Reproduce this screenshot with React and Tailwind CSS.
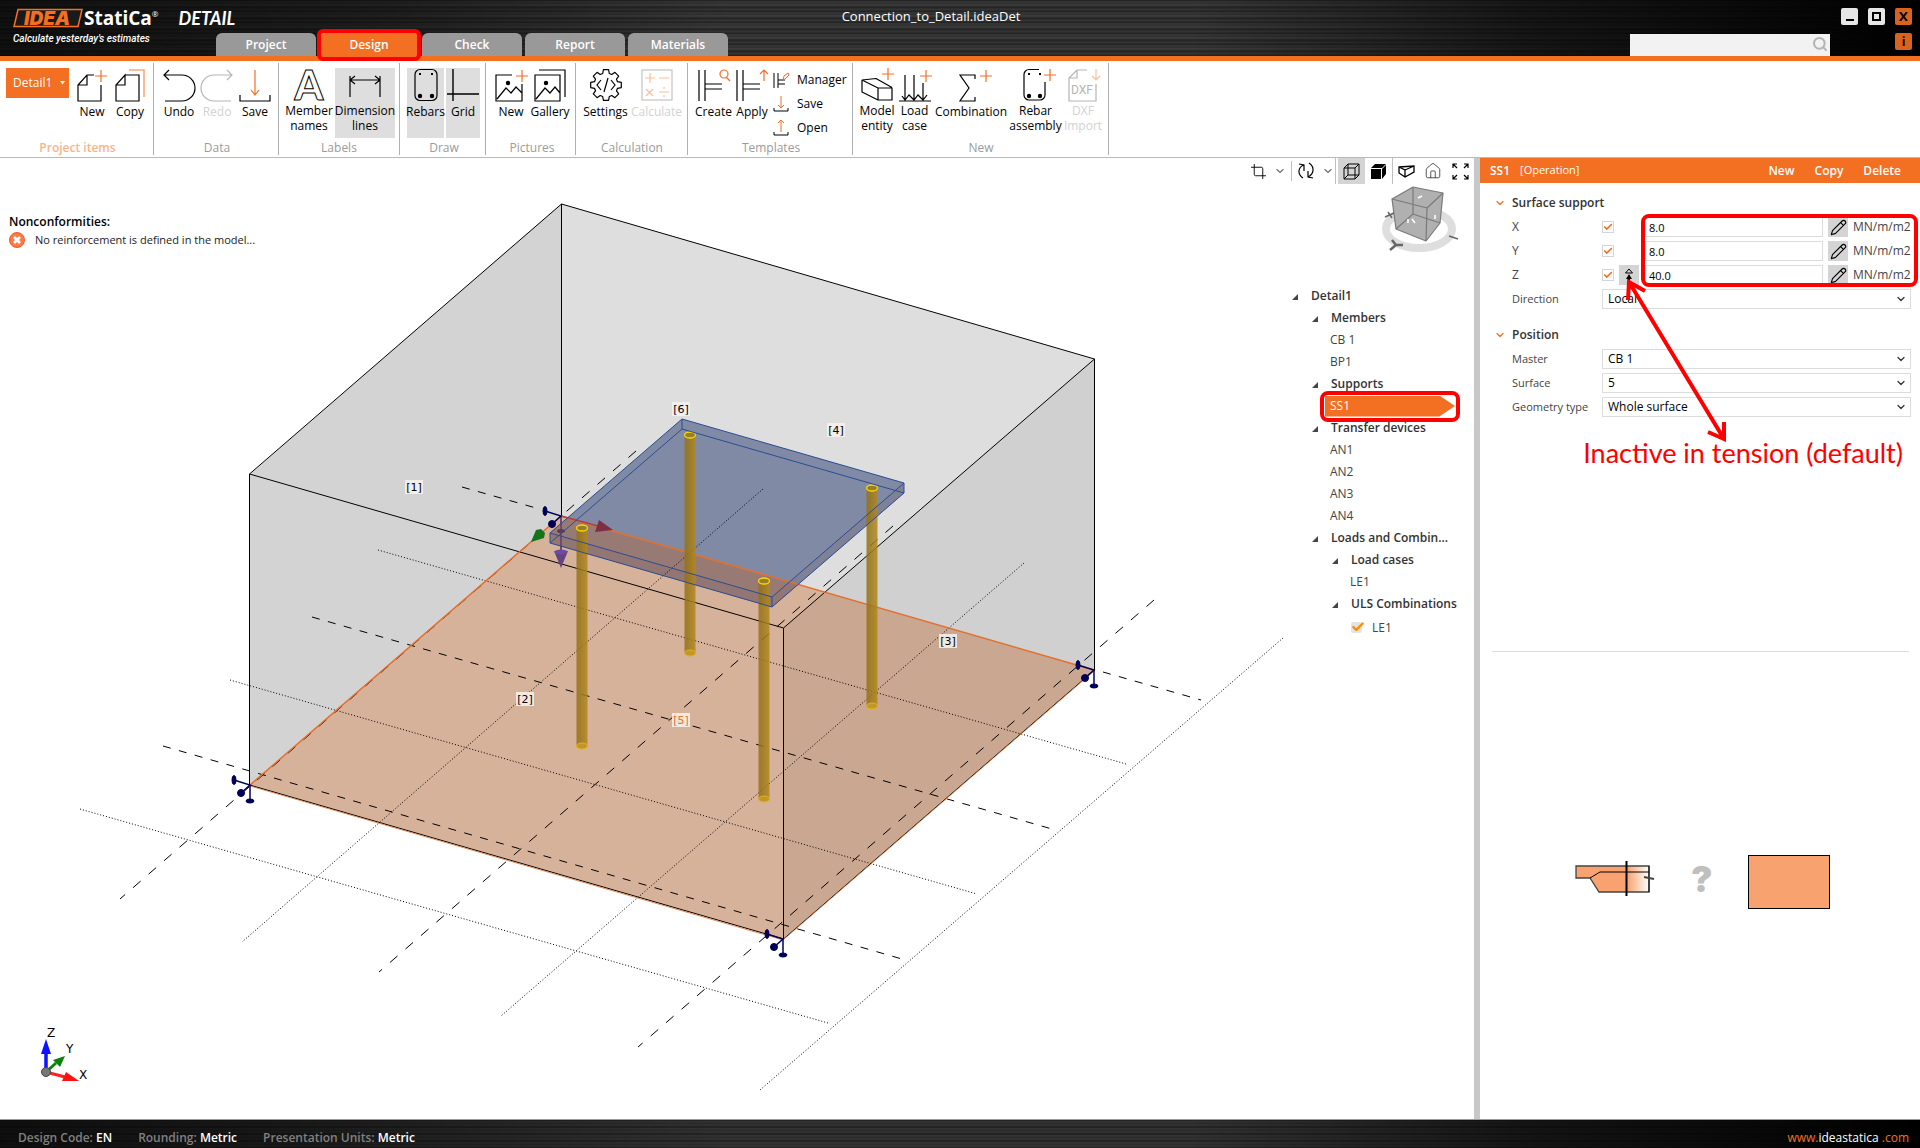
import React from 'react';
import { ChevronDown, Pencil, Check, Search, Crop, House } from 'lucide-react';

const ORANGE = '#f36f21';

/* ---------- ribbon icons ---------- */

function Icon({ children, color = '#000' }) {
  return (
    <svg width="32" height="32" viewBox="0 0 32 32" fill="none" stroke={color} strokeWidth="1.2" className="shrink-0 overflow-visible">
      {children}
    </svg>
  );
}

function Plus({ x = 25, y = 7 }) {
  return <path d={`M${x} ${y - 6}v12M${x - 6} ${y}h12`} stroke={ORANGE} />;
}

const gearPoints = () => {
  const pts = [];
  for (let i = 0; i < 8; i++) {
    const a = (i * Math.PI) / 4;
    [[-0.28, 12], [-0.17, 15.5], [0.17, 15.5], [0.28, 12]].forEach(([d, r]) => {
      pts.push(`${(16 + r * Math.sin(a + d)).toFixed(1)},${(16 - r * Math.cos(a + d)).toFixed(1)}`);
    });
  }
  return pts.join(' ');
};

const icons = {
  newItem: (
    <Icon>
      <path d="M25 16V32H2V16L11 6H18M11 6V16H2" />
      <Plus />
    </Icon>
  ),
  copy: (
    <Icon>
      <path d="M11 6H25V32H2V16L11 6V16H2" />
      <path d="M15 1H30V28" stroke="#f8a878" strokeWidth="1.6" />
    </Icon>
  ),
  undo: <Icon><path d="M1 6H19a13 13 0 0 1 0 26H2M6 1L1 6l5 5" /></Icon>,
  redo: <Icon color="#b5b5b5"><path d="M31 6H13a13 13 0 0 0 0 26H30M26 1l5 5-5 5" /></Icon>,
  save: (
    <Icon>
      <path d="M1 26V32H31V26" />
      <path d="M16 1V25M12 21l4 5 4-5" stroke={ORANGE} />
    </Icon>
  ),
  names: (
    <Icon>
      <text x="16" y="31" textAnchor="middle" fontFamily="Lato" fontWeight="900" fontSize="41" strokeWidth="1">A</text>
    </Icon>
  ),
  dims: <Icon><path d="M1 28V7M31 28V7M1 11H31M6 7l-5 4 5 4M26 7l5 4-5 4" /></Icon>,
  rebars: (
    <Icon>
      <rect x="5" y="0.5" width="22" height="31" rx="5" />
      <circle cx="10" cy="27" r="1.6" fill="#000" />
      <circle cx="22" cy="27" r="1.6" fill="#000" />
      <path d="M9 5h2M21 5h2" strokeWidth="2" />
    </Icon>
  ),
  grid: <Icon><path d="M6 0V32M0 25H32" strokeWidth="1.4" /></Icon>,
  picture: (
    <Icon>
      <path d="M17 6H1V32H27V15M2 30l9-11 5 5 5-6 6 6" />
      <circle cx="13" cy="14" r="1.6" fill="#000" />
      <Plus x={27} />
    </Icon>
  ),
  gallery: (
    <Icon>
      <path d="M1 6H26V32H1zM2 30l9-11 5 5 5-6 5 6M5 1H31V28" />
      <circle cx="12" cy="14" r="1.6" fill="#000" />
    </Icon>
  ),
  settings: (
    <Icon>
      <polygon points={gearPoints()} strokeLinejoin="round" />
      <path d="M11 11l-4 5 4 5M21 11l4 5-4 5M18 9l-4 14" />
    </Icon>
  ),
  calculate: (
    <Icon color="#c4c4c4">
      <rect x="1" y="1" width="30" height="30" />
      <path d="M9 4v10M4 9h10M18 9h10M5 20l7 7M12 20l-7 7M18 23h10M23 18v2M23 26v2" stroke="#fac09c" />
    </Icon>
  ),
  create: (
    <Icon>
      <path d="M1 1V32M7 1V32M7 15H24M7 20H24" />
      <circle cx="26" cy="5" r="4" stroke={ORANGE} />
      <path d="M28 8l4 4" stroke={ORANGE} />
    </Icon>
  ),
  apply: (
    <Icon>
      <path d="M1 1V32M7 1V32M7 15H24M7 20H24" />
      <path d="M28 12V1M24 5l4-4 4 4" stroke={ORANGE} />
    </Icon>
  ),
  model: (
    <Icon>
      <path d="M1 11L17 19V31L1 23zM1 11L15 9.500L31 18.500M17 19H31V31H17z" strokeLinejoin="round" />
      <Plus x={27} y={5} />
    </Icon>
  ),
  loadCase: (
    <Icon>
      <path d="M0 32H32M6 6V31M15 6V31M24 14V31M3 27l3 4 4-5 5 5 4-5 5 5 4-5" />
      <Plus x={27} />
    </Icon>
  ),
  sigma: (
    <Icon>
      <path d="M20 10V6H5L14 19L5 32H20V28" />
      <Plus x={31} />
    </Icon>
  ),
  rebarNew: (
    <Icon>
      <path d="M19 .500H9a5 5 0 0 0-5 5V26a5 5 0 0 0 5 5H20a5 5 0 0 0 5-5V13" />
      <circle cx="9" cy="27" r="1.6" fill="#000" />
      <circle cx="20" cy="27" r="1.6" fill="#000" />
      <path d="M8 5h2M19 5h2" strokeWidth="2" />
      <Plus x={30} y={6} />
    </Icon>
  ),
  dxf: (
    <Icon color="#b5b5b5">
      <path d="M20 1H10L2 9V32H29V15M10 1V9H2" />
      <path d="M29 0V11M25 7l4 4 4-4" stroke="#fac09c" />
      <text x="15" y="25" textAnchor="middle" fontFamily="Roboto" fontSize="12" stroke="none" fill="#b5b5b5">DXF</text>
    </Icon>
  ),
};

/* ---------- ribbon ---------- */

const groups = [
  {
    name: 'Project items', box: 'w-[154px] pl-1.5', caption: 'font-semibold text-[#f8b48c]', selector: true,
    items: [
      { label: 'New', icon: icons.newItem, w: 'w-[38px]' },
      { label: 'Copy', icon: icons.copy, w: 'w-[38px]' },
    ],
  },
  {
    name: 'Data', box: 'w-[125px] pl-1.5', caption: 'text-[#9b9b9b]',
    items: [
      { label: 'Undo', icon: icons.undo, w: 'w-[38px]' },
      { label: 'Redo', icon: icons.redo, w: 'w-[38px]', disabled: true },
      { label: 'Save', icon: icons.save, w: 'w-[38px]' },
    ],
  },
  {
    name: 'Labels', box: 'w-[121px] pl-1', caption: 'text-[#9b9b9b]',
    items: [
      { label: 'Member names', icon: icons.names, w: 'w-[52px]' },
      { label: 'Dimension lines', icon: icons.dims, w: 'w-[60px] bg-[#dedede]' },
    ],
  },
  {
    name: 'Draw', box: 'w-[86px] pl-[7px]', caption: 'text-[#9b9b9b]',
    items: [
      { label: 'Rebars', icon: icons.rebars, w: 'w-[37px] mr-0.5 bg-[#dedede]' },
      { label: 'Grid', icon: icons.grid, w: 'w-[34px] bg-[#dedede]' },
    ],
  },
  {
    name: 'Pictures', box: 'w-[90px] pl-[7px]', caption: 'text-[#9b9b9b]',
    items: [
      { label: 'New', icon: icons.picture, w: 'w-[36px]' },
      { label: 'Gallery', icon: icons.gallery, w: 'w-[42px]' },
    ],
  },
  {
    name: 'Calculation', box: 'w-[112px] pl-[5px]', caption: 'text-[#9b9b9b]',
    items: [
      { label: 'Settings', icon: icons.settings, w: 'w-[49px]' },
      { label: 'Calculate', icon: icons.calculate, w: 'w-[53px]', disabled: true },
    ],
  },
  {
    name: 'Templates', box: 'w-[165px] pl-[6px]', caption: 'text-[#9b9b9b]', templates: true,
    items: [
      { label: 'Create', icon: icons.create, w: 'w-[39px]' },
      { label: 'Apply', icon: icons.apply, w: 'w-[38px]' },
    ],
  },
  {
    name: 'New', box: 'w-[256px] pl-[5px]', caption: 'text-[#9b9b9b]',
    items: [
      { label: 'Model entity', icon: icons.model, w: 'w-[38px]' },
      { label: 'Load case', icon: icons.loadCase, w: 'w-[37px]' },
      { label: 'Combination', icon: icons.sigma, w: 'w-[76px]' },
      { label: 'Rebar assembly', icon: icons.rebarNew, w: 'w-[53px]' },
      { label: 'DXF Import', icon: icons.dxf, w: 'w-[42px]', disabled: true },
    ],
  },
];

function RibbonButton({ item }) {
  const [first, second] = item.label.split(' ');
  return (
    <button
      disabled={item.disabled}
      className={`${item.w} h-[70px] pt-px flex flex-col items-center gap-0.5 shrink-0 leading-[15px] disabled:text-[#d2d2d2]`}
    >
      {item.icon}
      {second ? <span>{first}<br />{second}</span> : <span className="pt-px">{first}</span>}
    </button>
  );
}

function TemplateButtons() {
  const small = [
    {
      label: 'Manager',
      art: <><path d="M1 1V16M5 1V16M5 8H12M5 12H12" /><path d="M10 8l1-4 4-3 1 2-4 4z" stroke={ORANGE} /></>,
    },
    { label: 'Save', art: <><path d="M1 12V15H15V12" /><path d="M8 0V12M5 9l3 3 3-3" stroke={ORANGE} /></> },
    { label: 'Open', art: <><path d="M1 12V15H15V12" /><path d="M8 12V0M5 3l3-3 3 3" stroke={ORANGE} /></> },
  ];
  return (
    <div className="flex flex-col pl-0.5">
      {small.map((s) => (
        <button key={s.label} className="flex items-center gap-2 h-6">
          <svg width="16" height="16" viewBox="0 0 16 16" fill="none" stroke="#000" className="overflow-visible">{s.art}</svg>
          {s.label}
        </button>
      ))}
    </div>
  );
}

function Ribbon() {
  return (
    <div className="flex h-[97px] pt-0.5 border-b border-[#b9b9b9] text-[12px] text-black bg-white">
      {groups.map((g) => (
        <div key={g.name} className={`${g.box} h-[92px] border-r border-[#b0b0b0] flex flex-col justify-between shrink-0`}>
          <div className="flex pt-[5px]">
            {g.selector && (
              <button className="w-[63px] h-[30px] mr-1 pl-[7px] pr-1 flex items-center justify-between bg-[#f36f21] text-white shrink-0">
                Detail1
                <svg width="5" height="4" viewBox="0 0 5 4"><path d="M0 0H5L2.500 3.500z" fill="#fff" /></svg>
              </button>
            )}
            {g.items.map((item) => <RibbonButton key={item.label} item={item} />)}
            {g.templates && <TemplateButtons />}
          </div>
          <div className={`text-center leading-[15px] pr-1 ${g.caption}`}>{g.name}</div>
        </div>
      ))}
    </div>
  );
}

/* ---------- header ---------- */

function Logo() {
  return (
    <div className="w-[216px] pl-[13px] pt-1.5 shrink-0">
      <div className="flex items-center text-white h-6">
        <svg width="70" height="20" viewBox="0 0 70 20" className="shrink-0">
          <path d="M5 1.500H69L65 18.500H1z" fill="#1a1a1a" stroke="#f36f21" strokeWidth="1.5" />
          <text x="34" y="16.500" textAnchor="middle" fontFamily="Inter" fontStyle="italic" fontWeight="900" fontSize="19" fill="#f36f21">IDEA</text>
        </svg>
        <span className="ml-px font-bold text-[19px]">StatiCa</span>
        <sup className="text-[8px]">®</sup>
        <span className="ml-5 font-['Lato'] font-bold italic text-[18px]">DETAIL</span>
      </div>
      <div className="text-white italic font-medium text-[10px] leading-[14px] mt-0.5 font-['Roboto']">Calculate yesterday&apos;s estimates</div>
    </div>
  );
}

function Header() {
  return (
    <header className="flex h-[61px] border-b-[5px] border-[#f36f21] bg-[linear-gradient(90deg,rgba(0,0,0,.7)_0%,rgba(0,0,0,.45)_20%,transparent_38%,transparent_62%,rgba(0,0,0,.6)_80%,#000_100%),repeating-linear-gradient(180deg,#1c1c1c_0px,#3c3c3c_2px,#2a2a2a_3px,#404040_5px,#222_7px,#383838_10px,#1e1e1e_11px)]">
      <Logo />
      <div className="flex-1 flex flex-col justify-between">
        <div className="pt-1.5 pl-4 text-center text-white text-[13px] leading-5">Connection_to_Detail.ideaDet</div>
        <nav className="flex gap-[3px] text-[12px] font-semibold text-white">
          {['Project', 'Design', 'Check', 'Report', 'Materials'].map((tab) => (
            <button
              key={tab}
              className={tab === 'Design' ? 'relative w-[100px] h-[23px] bg-[#f36f21]' : 'w-[100px] h-[23px] rounded-t-md bg-[#999]'}
            >
              {tab}
              {tab === 'Design' && <span className="absolute -inset-x-0.5 -top-1 -bottom-[5px] border-4 border-[#ff0000] rounded-md" />}
            </button>
          ))}
        </nav>
      </div>
      <div className="w-[290px] pt-2 pr-2 flex flex-col gap-2 shrink-0">
        <div className="flex justify-end gap-2.5">
          <button aria-label="Minimize" className="w-[17px] h-[17px] rounded-xs bg-[#e6e6e6] flex justify-center items-end pb-1">
            <span className="w-2 h-0.5 bg-black" />
          </button>
          <button aria-label="Maximize" className="w-[17px] h-[17px] rounded-xs bg-[#e6e6e6] flex justify-center items-center">
            <span className="w-[9px] h-[9px] border-2 border-black" />
          </button>
          <button aria-label="Close" className="w-[17px] h-[17px] rounded-xs bg-[#d9631e] flex justify-center items-center">
            <svg width="9" height="9" viewBox="0 0 9 9"><path d="M1 0L8 9M8 0L1 9" stroke="#000" strokeWidth="2" /></svg>
          </button>
        </div>
        <div className="flex justify-between">
          <label className="relative">
            <input type="search" aria-label="Search" className="w-[200px] h-[22px] bg-[#f2f2f2]" />
            <Search size={16} strokeWidth={3} className="absolute right-0.5 top-[3px] text-[#b5b5b5]" />
          </label>
          <button aria-label="Info" className="w-[17px] h-[17px] rounded-xs bg-[#d9631e] text-black font-bold text-[12px] leading-[16px]">i</button>
        </div>
      </div>
    </header>
  );
}

/* ---------- 3D scene ---------- */

const dashedX = [[462, 487, 536, 508], [1103, 672, 1201, 700], [312, 617, 1052, 829], [163, 746, 902, 959]];
const dottedX = [[378, 550, 1126, 764], [230, 680, 977, 894], [80, 809, 828, 1023]];
const dashedY = [[636, 451, 120, 899], [893, 526, 379, 972], [1154, 600, 638, 1047]];
const dottedY = [[763, 489, 242, 942], [1024, 563, 501, 1016], [1283, 638, 760, 1090]];

const bolts = [[690, 435], [872, 488], [582, 528], [764, 581]];
const faceTags = [
  ['[1]', 405, 480], ['[2]', 516, 692], ['[3]', 939, 634],
  ['[4]', 827, 423], ['[5]', 672, 713], ['[6]', 672, 402],
];

function Lines({ data, dash }) {
  return data.map(([x1, y1, x2, y2]) => (
    <line key={`${x1}-${y1}`} x1={x1} y1={y1} x2={x2} y2={y2} strokeDasharray={dash} />
  ));
}

function Support({ x, y, hidden }) {
  return (
    <g transform={`translate(${x} ${y})`} fill="#000058" stroke="#000058">
      <path d="M-16 -5L0 0L-9 8" fill="none" strokeWidth="1.5" />
      <ellipse cx="-16" cy="-5" rx="2" ry="4.5" />
      <ellipse cx="-9" cy="8" rx="3.5" ry="3.5" />
      {!hidden && <path d="M0 0V15" strokeWidth="1.5" />}
      {!hidden && <ellipse cx="0" cy="16" rx="4" ry="2" />}
    </g>
  );
}

function Scene() {
  return (
    <svg viewBox="0 158 1474 961" preserveAspectRatio="xMinYMin meet" className="absolute inset-0 w-full h-full">
      <defs>
        <linearGradient id="bolt" x1="0" x2="1">
          <stop offset="0" stopColor="#94701a" />
          <stop offset="0.3" stopColor="#987618" />
          <stop offset="1" stopColor="#b3881c" />
        </linearGradient>
        <clipPath id="floor"><polygon points="561,516 1094,670 783,939 250,785" /></clipPath>
      </defs>

      {/* Block faces */}
      <polygon points="561,204 250,474 250,785 561,516" fill="#d3d3d3" />
      <polygon points="561,204 1094,359 1094,670 561,516" fill="#dedede" />
      <polygon points="561,516 1094,670 783,939 250,785" fill="#d7b29b" />
      <polygon points="783,628 1094,359 1094,670 783,939" fill="#000" opacity="0.06" />

      {/* Plate fill */}
      <polygon points="682,419 904,483 904,493 772,607 550,543 550,533" fill="rgba(34,54,108,.5)" />
      <g clipPath="url(#floor)">
        <polygon points="682,419 904,483 904,493 772,607 550,543 550,533" fill="#987a75" />
      </g>
      <polygon points="550,533 772,597 904,483 904,493 772,607 550,543" fill="#7d6a70" opacity="0.25" />

      {/* Ground grid */}
      <g stroke="#000" strokeWidth="1" fill="none">
        <Lines data={dashedX} dash="8 8.5" />
        <Lines data={dottedX} dash="1 2" />
        <Lines data={dashedY} dash="10 10.5" />
        <Lines data={dottedY} dash="1 2" />
      </g>

      {/* Block edges */}
      <path
        d="M561.5 204L249.500 474V785L783.500 939L1094.500 670V359zM561.500 204V516M249.500 474L783.500 628L1094.500 359M783.500 628V939"
        stroke="#000" fill="none"
      />
      <path d="M561 516L1094 670M561 516L250 785" stroke="#e2702f" strokeWidth="1.5" fill="none" />
      <path d="M250 786L783 940L1094 671" stroke="#e2702f" strokeWidth="0.8" fill="none" />

      {/* Local axes */}
      <path d="M561 516V551" stroke="#6f4a73" strokeWidth="2" />
      <polygon points="554,551 568,551 561,568" fill="#64447f" />
      <ellipse cx="561" cy="552" rx="6.5" ry="2.5" fill="#6e4aa0" />
      <path d="M561 516L598 526" stroke="#b04040" strokeWidth="1.5" />
      <polygon points="599,520 613,530 595,532" fill="#7d2f45" />
      <ellipse cx="561" cy="531" rx="4" ry="2" fill="#5d3c50" />
      <Support x={561} y={516} hidden />
      <polygon points="531,542 536,530 541,529 545,533 544,538" fill="#177317" />

      {/* Bolts */}
      {bolts.map(([x, y]) => (
        <g key={x}>
          <rect x={x - 5.5} y={y} width="11" height="218" fill="url(#bolt)" opacity="0.85" />
          <ellipse cx={x} cy={y + 218} rx="5.5" ry="3" fill="#c2962a" stroke="#e0b414" />
          <ellipse cx={x} cy={y} rx="5.5" ry="3" fill="#94802c" stroke="#ffd400" strokeWidth="1.3" />
        </g>
      ))}

      {/* Plate edges */}
      <path
        d="M682 419L904 483L772 597L550 533zM682 429L904 493L772 607L550 543zM682 419V429M904 483V493M772 597V607M550 533V543"
        stroke="#2c4c92" fill="none"
      />

      <Support x={250} y={785} />
      <Support x={783} y={939} />
      <Support x={1094} y={670} />

      {faceTags.map(([t, x, y]) => (
        <g key={t}>
          <rect x={x} y={y} width="18" height="14" fill="#f6f2ef" opacity="0.85" />
          <text x={x + 9} y={y + 11} textAnchor="middle" fontFamily="DejaVu Sans" fontSize="11" fill={t === '[5]' ? ORANGE : '#000'}>{t}</text>
        </g>
      ))}

      {/* Axis triad */}
      <g fontFamily="DejaVu Sans" fontSize="12" fill="#000">
        <path d="M46 1072L56 1063" stroke="#0c800c" strokeWidth="3" />
        <polygon points="65,1056 53,1060 60,1067" fill="#0c800c" />
        <path d="M46 1072L65 1077" stroke="#ff2020" strokeWidth="3" />
        <polygon points="79,1081 66,1072 62,1081" fill="#f11" />
        <path d="M46 1072V1053" stroke="#11f" strokeWidth="3.5" />
        <polygon points="46,1039 41,1054 51,1054" fill="#11f" />
        <circle cx="46" cy="1072" r="4.5" fill="#777" stroke="#444" />
        <text x="47" y="1037">Z</text>
        <text x="66" y="1053">Y</text>
        <text x="79" y="1079">X</text>
      </g>
    </svg>
  );
}

function ViewCube() {
  return (
    <svg width="80" height="68" viewBox="1380 186 80 68" className="self-end mr-3.5 mt-px">
      <ellipse cx="1419" cy="230" rx="33" ry="19" fill="none" stroke="#dedede" strokeWidth="8" />
      <g stroke="#7a7a7a" strokeWidth="1.2" strokeLinejoin="round">
        <polygon points="1413,188 1443,194 1440,224 1426,242 1396,230 1392,200" fill="#b0b0b0" />
        <path d="M1392 200L1427 209L1443 194M1427 209L1426 242M1413 188V215L1396 230M1413 215L1440 224" fill="none" />
      </g>
      <path d="M1418 199l4-2M1408 220v4M1412 220l3 4M1435 216v4" stroke="#fff" strokeWidth="1.5" />
      <path d="M1385 218l9-4M1388 213l4 6M1449 237l9 3" stroke="#666" strokeWidth="1.5" />
      <path d="M1390 251l6-5M1396 246l7 0M1396 246l-4-5" stroke="#666" strokeWidth="2.5" />
    </svg>
  );
}

const toolButton = 'h-[26px] flex items-center justify-center';

function Toolbar() {
  return (
    <div className="flex items-center h-[26px] pl-1 text-black">
      <button aria-label="Clip" className={`w-5 ${toolButton}`}><Crop size={17} strokeWidth={1.3} /></button>
      <button aria-label="Clip options" className={`w-[22px] ${toolButton}`}><ChevronDown size={12} strokeWidth={2} /></button>
      <span className="w-px h-5 bg-[#c0c0c0]" />
      <button aria-label="Rotate" className={`w-[30px] ${toolButton}`}>
        <svg width="16" height="18" viewBox="0 0 16 18" fill="none" stroke="#000" strokeWidth="1.2">
          <path d="M5 16C-1 12 0 5 6 3M1 2l5 1v6M11 1c6 4 5 11-1 14M15 16l-5-1V9" />
        </svg>
      </button>
      <button aria-label="Rotate options" className={`w-3.5 ${toolButton}`}><ChevronDown size={12} strokeWidth={2} /></button>
      <div className="flex items-center border-x border-[#c0c0c0] h-[26px] pl-0.5">
        <button aria-label="Wireframe" className={`w-[27px] bg-[#d4d4d4] ${toolButton}`}>
          <svg width="17" height="17" viewBox="0 0 17 17" fill="none" stroke="#000">
            <path d="M1 5H12V16H1zM1 5L5 1H16L12 5M16 1V12L12 16M5 1V12H16M5 12L1 16" />
          </svg>
        </button>
        <button aria-label="Solid" className={`w-[27px] ${toolButton}`}>
          <svg width="17" height="17" viewBox="0 0 17 17"><path d="M1 6H11V16H1zM1 5L5 1H16L12 5zM12 6L16 2V11L12 16z" /></svg>
        </button>
      </div>
      <button aria-label="Perspective" className={`w-7 ${toolButton}`}>
        <svg width="17" height="17" viewBox="0 0 17 17" fill="none" stroke="#000" strokeWidth="1.3">
          <path d="M1 4L16 3V9L7 14L1 10zM1 4L7 7V14M7 7L16 3" />
        </svg>
      </button>
      <button aria-label="Home" className={`w-[26px] ${toolButton}`}><House size={18} strokeWidth={1.2} className="text-[#444]" /></button>
      <button aria-label="Fit" className={`w-7 ${toolButton}`}>
        <svg width="17" height="17" viewBox="0 0 17 17" fill="none" stroke="#000" strokeWidth="1.2">
          <path d="M1 5V1H5M1 1l4 4M12 1h4v4M16 1l-4 4M1 12v4H5M1 16l4-4M12 16h4V12M16 16l-4-4" />
        </svg>
      </button>
    </div>
  );
}

const tree = [
  { t: 'Detail1', pad: 'pl-[7px]', head: true },
  { t: 'Members', pad: 'pl-[27px]', head: true },
  { t: 'CB 1', pad: 'pl-[45px]' },
  { t: 'BP1', pad: 'pl-[45px]' },
  { t: 'Supports', pad: 'pl-[27px]', head: true },
  { t: 'SS1', pad: 'pl-[45px]', selected: true },
  { t: 'Transfer devices', pad: 'pl-[27px]', head: true },
  { t: 'AN1', pad: 'pl-[45px]' },
  { t: 'AN2', pad: 'pl-[45px]' },
  { t: 'AN3', pad: 'pl-[45px]' },
  { t: 'AN4', pad: 'pl-[45px]' },
  { t: 'Loads and Combin...', pad: 'pl-[27px]', head: true },
  { t: 'Load cases', pad: 'pl-[47px]', head: true },
  { t: 'LE1', pad: 'pl-[65px]' },
  { t: 'ULS Combinations', pad: 'pl-[47px]', head: true },
];

function Tree() {
  return (
    <ul className="w-[189px] self-end mt-8 text-[12px] leading-[22px] text-[#444]">
      {tree.map((n, i) => (
        <li key={i} className={`${n.pad} flex items-center h-[22px]`}>
          {n.head && <svg width="6" height="6" viewBox="0 0 6 6" className="mr-[13px] mt-0.5"><path d="M6 0V6H0z" fill="#444" /></svg>}
          {n.selected ? (
            <div className="relative -ml-[5px]">
              <div className="w-[130px] h-[21px] pl-[5px] bg-[#f36f21] text-white leading-5 [clip-path:polygon(0_0,88%_0,100%_50%,88%_100%,0_100%)]">{n.t}</div>
              <span className="absolute -inset-[5px] border-4 border-[#ff0000] rounded-lg" />
            </div>
          ) : (
            <span className={n.head ? 'font-semibold whitespace-nowrap text-[#333]' : ''}>{n.t}</span>
          )}
        </li>
      ))}
      <li className="pl-[66px] pt-px">
        <label className="flex items-center gap-2 h-6">
          <span className="relative w-[13px] h-[13px]">
            <input type="checkbox" defaultChecked className="block appearance-none w-[11px] h-[11px] rounded-xs bg-[#e4e4e4]" />
            <Check size={14} strokeWidth={4} className="absolute left-0 -top-0.5 text-[#ff8c00] pointer-events-none" />
          </span>
          LE1
        </label>
      </li>
    </ul>
  );
}

function Viewport() {
  return (
    <main className="relative flex-1 bg-white">
      <Scene />
      <div className="relative flex justify-between">
        <section className="pt-[55px] pl-[9px] text-[12px] leading-[18px] text-black">
          <h2 className="font-semibold">Nonconformities:</h2>
          <p className="flex items-center gap-2.5 text-[11px] text-[#222]">
            <svg width="16" height="16" viewBox="0 0 16 16">
              <circle cx="8" cy="8" r="7.5" fill="#fb7a48" stroke="#f05a28" />
              <path d="M5 5l6 6M11 5l-6 6" stroke="#fff" strokeWidth="2.8" />
            </svg>
            No reinforcement is defined in the model...
          </p>
        </section>
        <div className="flex flex-col w-[229px]">
          <Toolbar />
          <ViewCube />
          <Tree />
        </div>
      </div>
    </main>
  );
}

/* ---------- properties ---------- */

function SectionTitle({ children }) {
  return (
    <h3 className="flex items-center gap-1.5 pl-[14px] h-6 font-semibold text-[#333]">
      <ChevronDown size={12} strokeWidth={2.5} className="text-[#f36f21]" />
      {children}
    </h3>
  );
}

function SelectRow({ id, label, value }) {
  return (
    <div className="flex items-center h-6 pl-8 pr-[9px]">
      <label htmlFor={id} className="w-[90px] shrink-0 text-[11px]">{label}</label>
      <div className="relative flex-1">
        <select id={id} className="block w-full h-5 appearance-none border border-[#dcdcdc] bg-white pl-[5px] text-black leading-4">
          <option>{value}</option>
        </select>
        <ChevronDown size={12} strokeWidth={2.5} className="absolute right-1 top-1 text-[#333] pointer-events-none" />
      </div>
    </div>
  );
}

function StiffnessRow({ axis, value, tension }) {
  return (
    <div className="flex items-center h-6 pl-8 pr-[9px]">
      <label htmlFor={`k${axis}`} className="w-[90px] shrink-0">{axis}</label>
      <span className="relative w-3 h-3">
        <input type="checkbox" defaultChecked aria-label={`${axis} active`} className="block appearance-none w-3 h-3 border border-[#d6d6d6]" />
        <Check size={10} strokeWidth={4} className="absolute left-px top-px text-[#f36f21] pointer-events-none" />
      </span>
      <div className="w-[31px] pl-[5px]">
        {tension && (
          <button aria-label="Inactive in tension" className="w-5 h-5 bg-[#d4d4d4] flex items-center justify-center">
            <svg width="10" height="17" viewBox="0 0 10 17"><path d="M1.500 6H8.500L5 2z" fill="none" stroke="#000" /><path d="M2 12L5 7l3 5H6v5H4v-5z" /></svg>
          </button>
        )}
      </div>
      <input id={`k${axis}`} defaultValue={value} className="flex-1 min-w-0 h-5 border border-[#dcdcdc] pl-[3px] text-[11px] text-black" />
      <button aria-label={`Edit ${axis}`} className="w-5 h-5 mx-[5px] bg-[#d4d4d4] flex items-center justify-center shrink-0">
        <Pencil size={17} strokeWidth={1.6} className="text-black" />
      </button>
      <span className="w-[58px] whitespace-nowrap">MN/m/m2</span>
    </div>
  );
}

function Properties() {
  return (
    <aside className="relative w-[446px] shrink-0 border-l-[6px] border-[#c8c8c8] bg-white text-[12px] text-[#444]">
      <div className="flex items-center h-[25px] bg-[#f36f21] text-white pl-2.5 pr-[19px] font-semibold">
        <span>SS1</span>
        <span className="flex-1 pl-2.5 text-[11px] font-normal">[Operation]</span>
        <div className="flex gap-5">
          <button>New</button>
          <button>Copy</button>
          <button>Delete</button>
        </div>
      </div>

      <div className="pt-2">
        <SectionTitle>Surface support</SectionTitle>
        <StiffnessRow axis="X" value="8.0" />
        <StiffnessRow axis="Y" value="8.0" />
        <StiffnessRow axis="Z" value="40.0" tension />
        <SelectRow id="direction" label="Direction" value="Local" />
      </div>
      <div className="pt-3">
        <SectionTitle>Position</SectionTitle>
        <SelectRow id="master" label="Master" value="CB 1" />
        <SelectRow id="surface" label="Surface" value="5" />
        <SelectRow id="geometry" label="Geometry type" value="Whole surface" />
      </div>

      {/* Callout over the stiffness values */}
      <div className="absolute right-0.5 top-[56px] w-[277px] h-[73px] border-4 border-[#ff0000] rounded-lg pointer-events-none" />
      <svg width="110" height="170" viewBox="1620 275 110 170" className="absolute right-[190px] top-[117px] pointer-events-none" fill="none" stroke="#f00" strokeWidth="4">
        <path d="M1629 282L1724 439M1628 300L1629 282L1645 291M1708 432L1724 439V422" />
      </svg>
      <p className="absolute right-[17px] top-[278px] text-[27px] leading-[34px] font-['Lato'] text-[#ff0000] whitespace-nowrap">Inactive in tension (default)</p>

      <hr className="mt-[232px] ml-3 mr-[11px] border-[#dcdcdc]" />
      <div className="flex items-start h-[54px] mt-[203px] pl-[95px]">
        <svg width="80" height="36" viewBox="0 0 80 36" className="mt-1.5">
          <defs>
            <linearGradient id="fade" x1="0" x2="1">
              <stop offset="0.7" stopColor="#f8a26f" />
              <stop offset="1" stopColor="#fff" />
            </linearGradient>
          </defs>
          <path d="M1 5H74V31H24L15 17H1z" fill="url(#fade)" stroke="#444" strokeWidth="1.3" />
          <path d="M15 17L25 11H74M74 5V31" fill="none" stroke="#000" />
          <path d="M51.500 0V35" stroke="#000" strokeWidth="2" />
          <path d="M69 16l10 2" stroke="#444" strokeWidth="2" />
        </svg>
        <span className="w-5 ml-9 mt-1.5 text-center text-[36px] leading-[36px] font-black font-['Inter'] text-[#bfbfbf]">?</span>
        <span className="w-[82px] h-[54px] ml-[37px] border border-black bg-[#f8a26f]" />
      </div>
    </aside>
  );
}

function StatusBar() {
  const items = [['Design Code:', 'EN'], ['Rounding:', 'Metric'], ['Presentation Units:', 'Metric']];
  return (
    <footer className="flex items-center justify-between h-[29px] border-t border-[#9a9a9a] pl-[18px] pr-[11px] pt-2 text-[12px] leading-5 bg-[linear-gradient(90deg,rgba(0,0,0,.7)_0%,rgba(0,0,0,.5)_15%,transparent_38%,transparent_62%,rgba(0,0,0,.6)_80%,#000_100%),repeating-linear-gradient(180deg,#1c1c1c_0px,#3a3a3a_2px,#262626_3px,#363636_5px,#1e1e1e_7px)]">
      <div className="flex gap-[26px] font-semibold text-[#808080]">
        {items.map(([k, v]) => (
          <span key={k}>{k} <span className="text-white">{v}</span></span>
        ))}
      </div>
      <a href="#home" className="text-[#f36f21]">www.<span className="text-white">ideastatica</span> .com</a>
    </footer>
  );
}

export default function App() {
  return (
    <div className="min-h-screen flex flex-col bg-white font-['Open_Sans','Noto_Sans',sans-serif]">
      <Header />
      <Ribbon />
      <div className="flex flex-1">
        <Viewport />
        <Properties />
      </div>
      <StatusBar />
    </div>
  );
}
